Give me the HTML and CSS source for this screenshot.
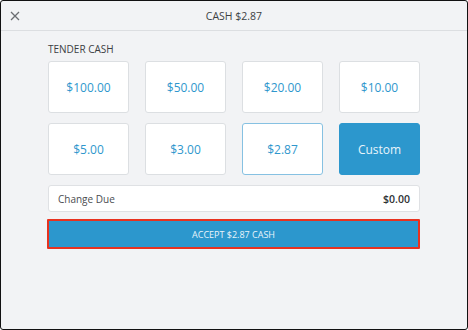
FILE: index.html
```html
<!DOCTYPE html>
<html lang="en">
<head>
  <meta charset="UTF-8" />
  <title>Cash</title>
  <link rel="stylesheet" href="styles.css">
</head>
<body>
  <div class="screen">
    <header class="topbar">
      <button class="close" aria-label="Close">
        <svg width="10" height="10" viewBox="0 0 10 10"><path d="M1 1L9 9M9 1L1 9" stroke="#6b6e72" stroke-width="1.3" fill="none"/></svg>
      </button>
      <div class="title">CASH $2.87</div>
    </header>

    <div class="container">
      <div class="label">TENDER CASH</div>
      <div class="tenders">
        <button class="tender">$100.00</button>
        <button class="tender">$50.00</button>
        <button class="tender">$20.00</button>
        <button class="tender">$10.00</button>
        <button class="tender">$5.00</button>
        <button class="tender">$3.00</button>
        <button class="tender selected">$2.87</button>
        <button class="tender custom">Custom</button>
      </div>

      <div class="change">
        <span>Change Due</span>
        <span class="amount">$0.00</span>
      </div>

      <button class="accept">ACCEPT $2.87 CASH</button>
    </div>
  </div>
</body>
</html>
```

FILE: styles.css
```css
* { box-sizing: border-box; }
body { margin: 0; font-family: "Open Sans", "Noto Sans", sans-serif; }
.screen {
  width: 468px;
  height: 330px;
  background: #f2f3f5;
  border: 1px solid #111;
  border-radius: 3px;
  overflow: hidden;
}
.topbar {
  height: 30px;
  border-bottom: 1px solid #dcdee1;
  display: flex;
  align-items: center;
  position: relative;
}
.close {
  position: absolute;
  left: 8px;
  top: 9px;
  width: 12px;
  height: 12px;
  padding: 0;
  border: none;
  background: none;
  display: flex;
  align-items: center;
  justify-content: center;
}
.title {
  flex: 1;
  text-align: center;
  font-size: 10.5px;
  color: #3c3f43;
}
.container { padding: 12px 0 0 47px; width: 419px; }
.label {
  font-size: 10px;
  color: #3c3f43;
  height: 18px;
  line-height: 12px;
}
.tenders {
  display: grid;
  grid-template-columns: repeat(4, 1fr);
  column-gap: 16px;
  row-gap: 10px;
}
.tender {
  height: 52px;
  background: #fff;
  border: 1px solid #dcdfe2;
  border-radius: 3px;
  color: #2f97cd;
  font-family: inherit;
  font-size: 12px;
  padding: 0;
}
.tender.selected { border-color: #86c1e2; }
.tender.custom {
  background: #2c97cd;
  border-color: #2c97cd;
  color: #e8f4fb;
}
.change {
  margin-top: 10px;
  height: 27px;
  background: #fff;
  border: 1px solid #dfe1e4;
  border-radius: 3px;
  display: flex;
  justify-content: space-between;
  align-items: center;
  padding: 0 9px;
  font-size: 10px;
  color: #4a4d51;
}
.change .amount { font-weight: 600; color: #2e3135; font-size: 10.5px; }
.accept {
  display: block;
  width: 373px;
  margin: 7px 0 0 -1px;
  height: 30px;
  background: #2c97cd;
  border: 2px solid #e8321f;
  border-radius: 1px;
  color: #e9f4fb;
  font-family: inherit;
  font-size: 9px;
  padding: 0;
}
```
